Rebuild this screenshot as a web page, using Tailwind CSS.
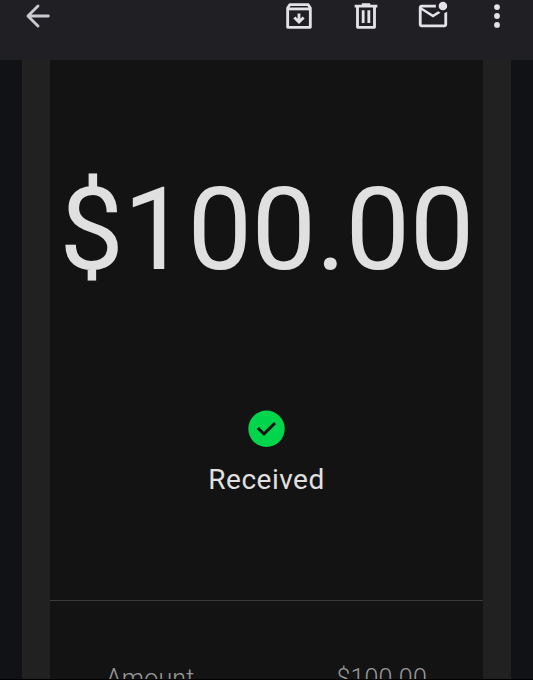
<!DOCTYPE html>
<html lang="en">
<head>
    <meta charset="UTF-8">
    <meta name="viewport" content="width=device-width, initial-scale=1.0">
    <title>Payment received</title>
    <script src="https://cdn.jsdelivr.net/npm/@tailwindcss/browser@4"></script>
</head>
<body class="h-[680px] overflow-hidden bg-[#111216] font-['Roboto',sans-serif] text-[#e0e0e0]">
    <div class="flex h-[680px] flex-col overflow-hidden border-b border-black">

        <!-- Toolbar -->
        <header class="flex h-[60px] shrink-0 items-start justify-between bg-[#201f24] pr-[19px] pl-[21px] text-[#e4e2e8]">
            <button class="-mt-px text-[#cbc8d1]" aria-label="Back">
                <svg class="size-[34px]" viewBox="0 0 24 24" fill="none" stroke="currentColor" stroke-width="2" stroke-linecap="round" stroke-linejoin="round">
                    <path d="M19.300 12H5M12 4.900 4.900 12l7.100 7.100"/>
                </svg>
            </button>
            <div class="-mt-px flex">
                <button aria-label="Archive">
                    <svg class="size-[34px]" viewBox="0 0 24 24" fill="none" stroke="currentColor" stroke-width="2" stroke-linejoin="round">
                        <path d="M4 6.300 5.500 4h13L20 6.300V20H4z"/>
                        <path d="M4 7h16"/>
                        <path d="M12 10.200v6M8.700 13l3.300 3.300 3.300-3.300" stroke-linejoin="miter"/>
                    </svg>
                </button>
                <button class="ml-[33px]" aria-label="Delete">
                    <svg class="size-[34px]" viewBox="0 0 24 24" fill="none" stroke="currentColor" stroke-width="2" stroke-linejoin="round">
                        <path d="M4 5h16M9 4h6"/>
                        <path d="M6 5v15h12V5"/>
                        <path d="M10 8v9M14 8v9"/>
                    </svg>
                </button>
                <button class="ml-[33px]" aria-label="Mark unread">
                    <svg class="size-[34px]" viewBox="0 0 24 24" fill="currentColor">
                        <path d="M22 8.980V18c0 1.100-.9 2-2 2H4c-1.100 0-2-.9-2-2V6c0-1.100.9-2 2-2h10.100c-.06.320-.1.660-.1 1s.04.680.1 1H4l8 5 3.670-2.290c.47.430 1.020.760 1.630.980L12 13 4 8v10h16V9.900c.740-.150 1.420-.480 2-.920z"/>
                        <circle cx="19" cy="5" r="3"/>
                    </svg>
                </button>
                <button class="ml-[30px]" aria-label="More">
                    <svg class="size-[34px]" viewBox="0 0 24 24" fill="currentColor">
                        <circle cx="12" cy="5.700" r="2.050"/>
                        <circle cx="12" cy="12" r="2.050"/>
                        <circle cx="12" cy="18.300" r="2.050"/>
                    </svg>
                </button>
            </div>
        </header>

        <!-- Email body -->
        <main class="mx-[22px] flex min-h-0 flex-1 bg-[#212121] px-7">
            <div class="flex w-full flex-col bg-[#131313]">
                <section class="flex h-[541px] shrink-0 flex-col items-center border-b border-[#3b3b3b]">
                    <h1 class="mt-[110px] text-[115px] leading-[120px] tracking-[-0.5px] whitespace-nowrap">$100.00</h1>
                    <svg class="mt-[120px] size-[37px] shrink-0" viewBox="0 0 37 37" fill="none">
                        <circle cx="18.500" cy="18.800" r="18.200" fill="#00d54b"/>
                        <path d="m9.900 18 6.100 6 11-11" stroke="#131313" stroke-width="3"/>
                    </svg>
                    <p class="mt-4 text-[28px] leading-[34px] tracking-[0.5px]">Received</p>
                </section>
                <div class="flex justify-between px-14 pt-[63px] text-[25px] leading-[30px] font-light tracking-[0.2px] text-[#9a9a9a]">
                    <span>Amount</span>
                    <span>$100.00</span>
                </div>
            </div>
        </main>
    </div>
</body>
</html>
